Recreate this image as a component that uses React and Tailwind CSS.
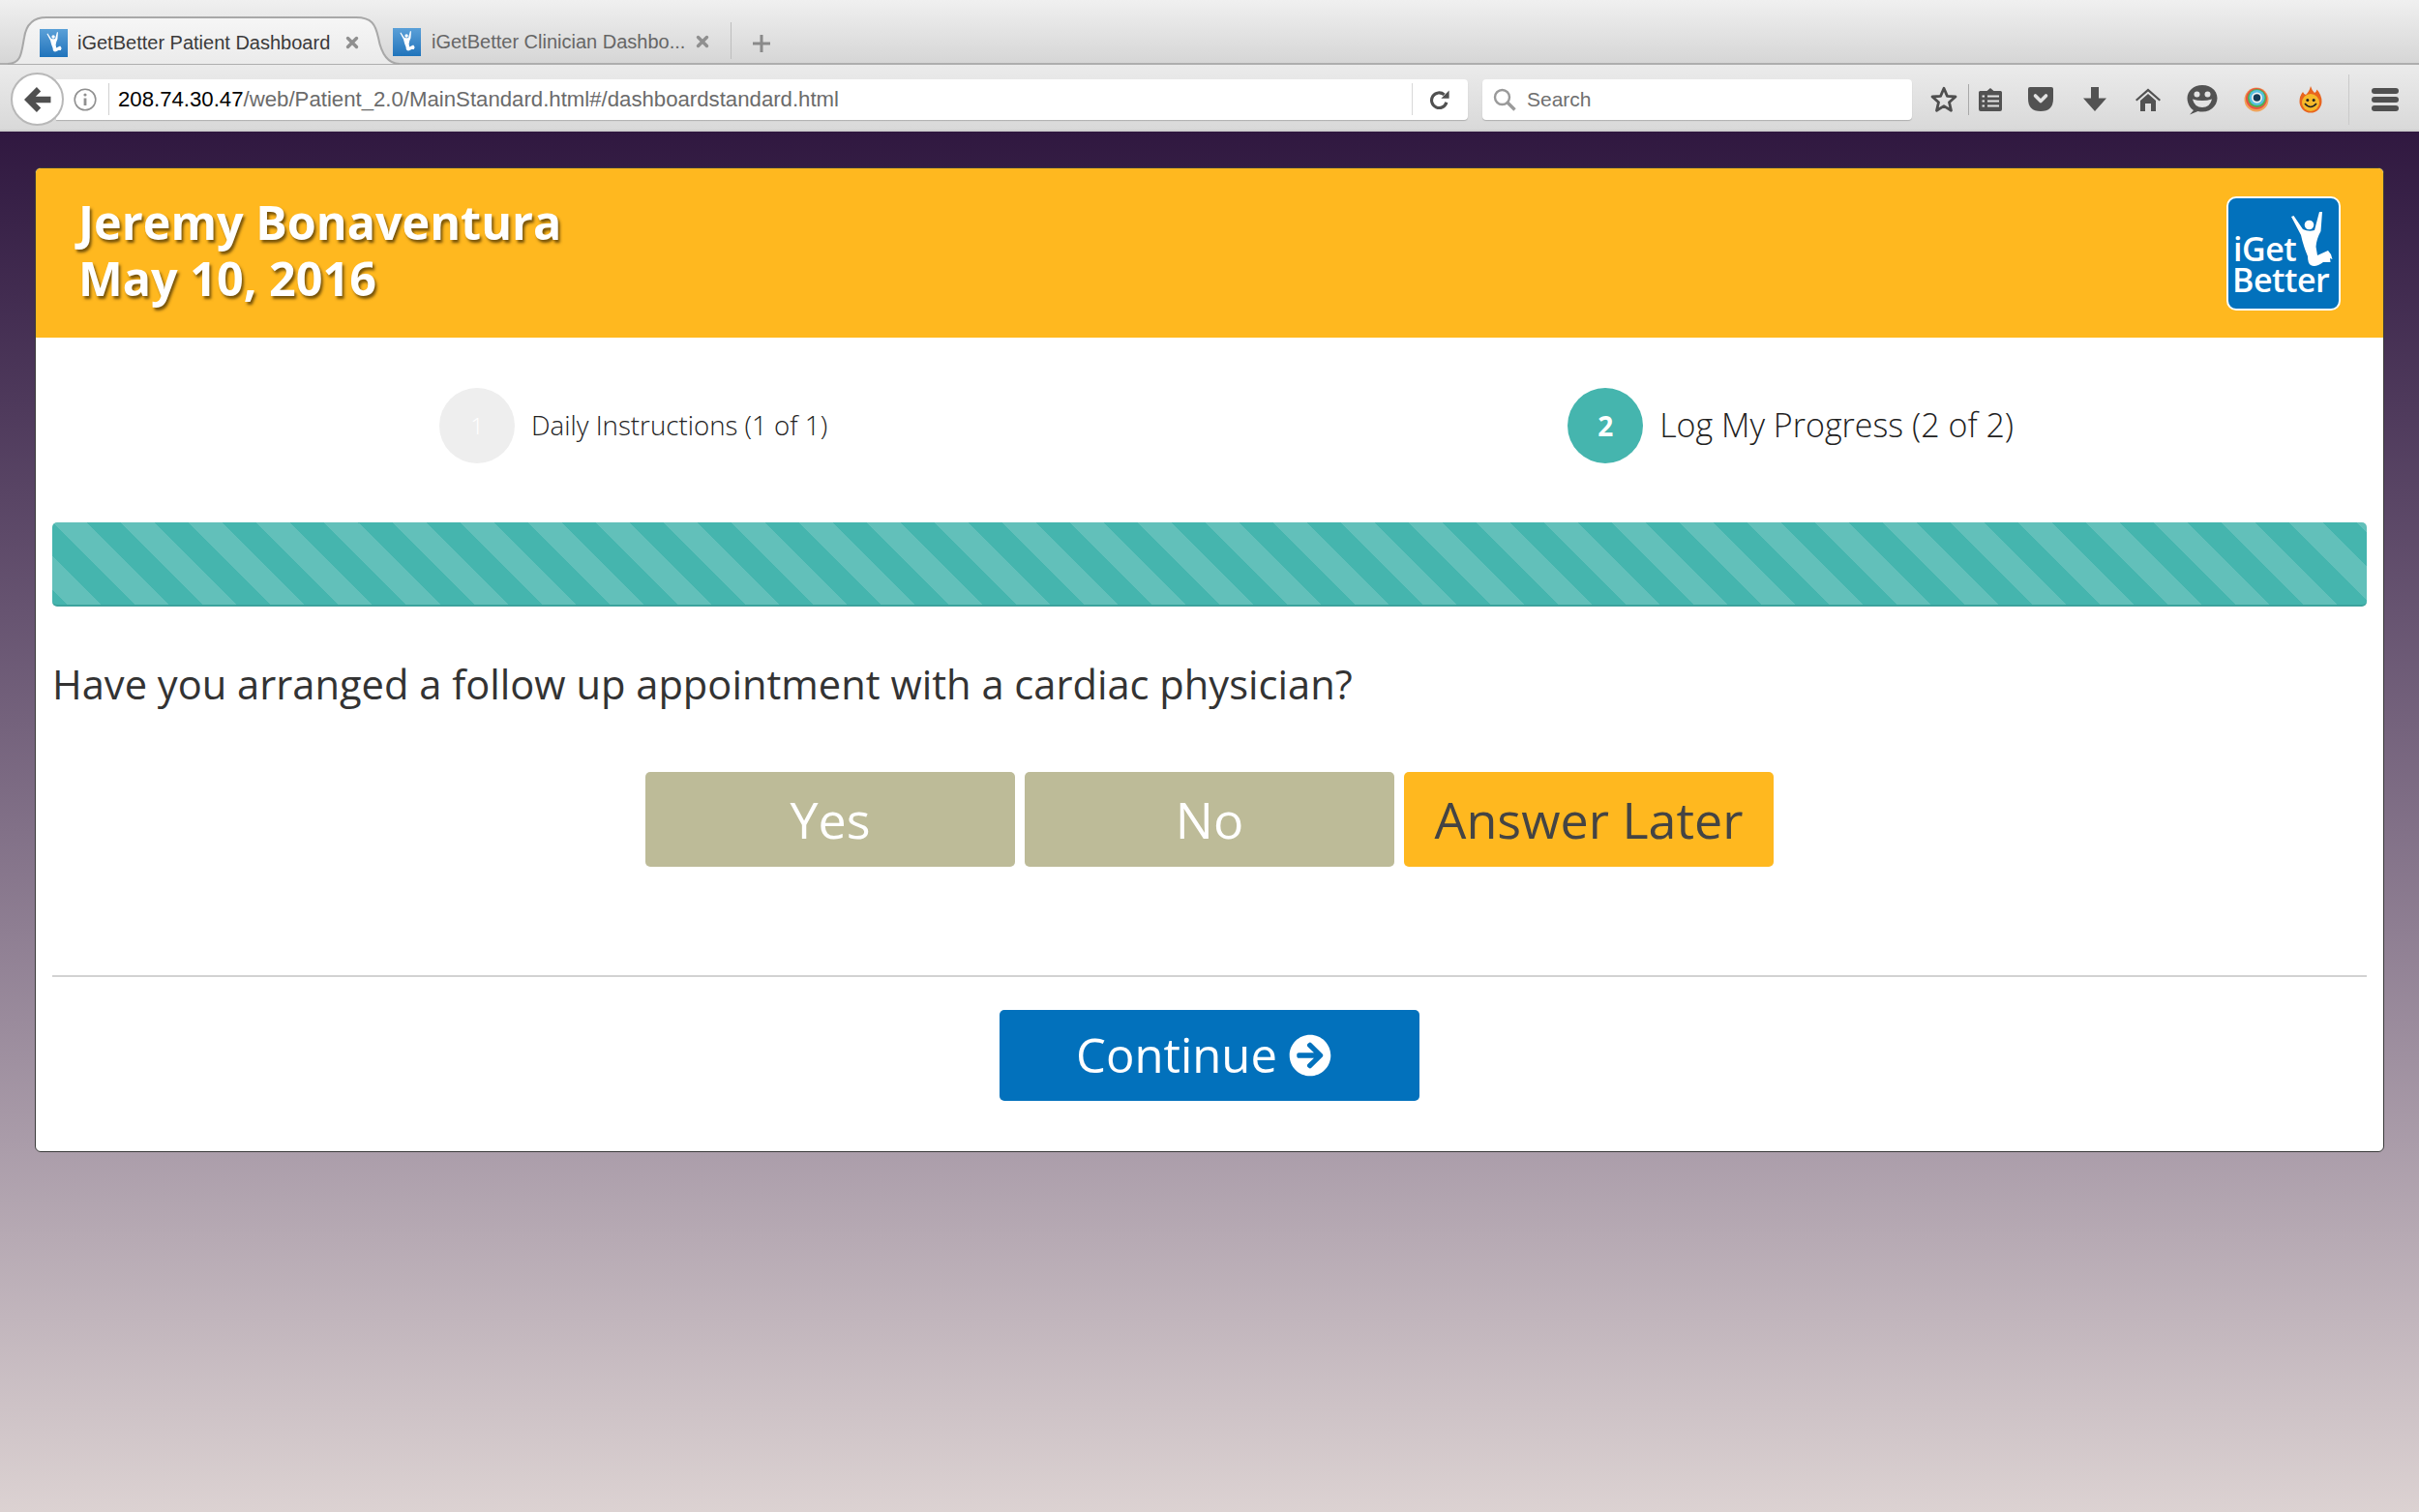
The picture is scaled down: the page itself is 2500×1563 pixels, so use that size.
import React from "react";
import { FaArrowCircleRight } from "react-icons/fa";

const sans = "[font-family:'Liberation_Sans',Arial,sans-serif]";

function Man({ className }) {
  return (
    <svg viewBox="60 10 56 72" className={className} fill="#fff">
      <circle cx="85.5" cy="29.5" r="4.8" />
      <path d="M67 21 L69.5 20 L79 34 Q85 37 91 35 L96 16 L99 16 L97.5 36 Q93 44 92.5 52 L94 61 L105 56 L108 60 L109.5 65 L107 64 L107.5 68 L100 68 Q92 74 87 71 Q84 69 84 62 Q79 50 77 40 Z" />
    </svg>
  );
}

function Favicon() {
  return (
    <div className="flex h-[29px] w-[29px] shrink-0 items-center justify-center bg-gradient-to-b from-[#5aa0d8] to-[#1f74bb]">
      <Man className="h-[26px] w-[22px]" />
    </div>
  );
}

function Close() {
  return (
    <svg viewBox="0 0 14 14" className="h-[14px] w-[14px] shrink-0" stroke="#8f8f8f" strokeWidth="3.4" strokeLinecap="round">
      <path d="M2.5 2.5 L11.5 11.5 M11.5 2.5 L2.5 11.5" />
    </svg>
  );
}

function ToolIcon({ children, vb = "0 0 28 28", cls = "h-[28px] w-[28px]" }) {
  return (
    <svg viewBox={vb} className={cls}>
      {children}
    </svg>
  );
}

function Tabs() {
  return (
    <div className={`flex h-[67px] shrink-0 items-end border-b-2 border-[#aeaeae] bg-gradient-to-b from-[#f0f0f0] to-[#d6d6d6] ${sans}`}>
      <div className="relative -mb-[2px] ml-[8px] flex h-[50px] w-[405px] items-center pl-[33px] pr-[42px] pt-[4px]">
        <svg viewBox="0 0 405 50" preserveAspectRatio="none" className="absolute inset-0 h-full w-full">
          <defs>
            <linearGradient id="tabfill" x1="0" y1="0" x2="0" y2="1">
              <stop offset="0" stopColor="#f6f6f6" />
              <stop offset="1" stopColor="#ebebeb" />
            </linearGradient>
          </defs>
          <path d="M0 49 C14 49 14 38 17 22 C19 8 26 1 40 1 L360 1 C376 1 380 8 383 22 C386 38 392 49 405 49 Z" fill="url(#tabfill)" />
          <path d="M0 49 C14 49 14 38 17 22 C19 8 26 1 40 1 L360 1 C376 1 380 8 383 22 C386 38 392 49 405 49" fill="none" stroke="#a8a8a8" strokeWidth="2" />
        </svg>
        <div className="relative flex w-full items-center gap-[10px]">
          <Favicon />
          <span className="flex-1 whitespace-nowrap text-[20px] text-[#3a3a3a]">iGetBetter Patient Dashboard</span>
          <Close />
        </div>
      </div>
      <div className="relative -ml-[7px] flex h-[50px] w-[349px] items-center gap-[11px] pr-[22px] pt-[6px]">
        <Favicon />
        <span className="flex-1 whitespace-nowrap text-[20px] text-[#666666]">iGetBetter Clinician Dashbo...</span>
        <Close />
      </div>
      <div className="mb-[4px] h-[38px] w-px bg-[#bdbdbd]" />
      <svg viewBox="0 0 18 18" className="mb-[11px] ml-[22px] h-[18px] w-[18px]" stroke="#8a8a8a" strokeWidth="3">
        <path d="M9 0 V18 M0 9 H18" />
      </svg>
    </div>
  );
}

function Toolbar() {
  return (
    <div className={`flex h-[69px] shrink-0 items-center border-b-2 border-[#cfcfcf] bg-gradient-to-b from-[#ebebeb] to-[#d9d9d9] pl-[11px] pt-[4px] ${sans}`}>
      <div className="relative z-10 flex h-[55px] w-[55px] shrink-0 items-center justify-center rounded-full border-2 border-[#b8b8b8] bg-white">
        <svg viewBox="0 0 26 26" className="h-[28px] w-[28px]" fill="#505050">
          <path d="M12 1 L16 5 L11 10 H25.5 V16 H11 L16 21 L12 25 L0 13 Z" />
        </svg>
      </div>
      <div className="-ml-[8px] flex h-[42px] w-[1459px] shrink-0 items-center rounded-r-[4px] bg-white pl-[18px] shadow-[0_1px_1px_rgba(0,0,0,0.2)]">
        <svg viewBox="0 0 24 24" className="h-[24px] w-[24px] shrink-0" fill="none" stroke="#909090" strokeWidth="1.6">
          <circle cx="12" cy="12" r="10.8" />
          <circle cx="12" cy="7" r="1.6" fill="#909090" stroke="none" />
          <path d="M12 10.5 V18" strokeWidth="2.8" />
        </svg>
        <div className="ml-[12px] h-[33px] w-px shrink-0 bg-[#d0d0d0]" />
        <div className="ml-[9px] flex-1 whitespace-nowrap text-[22.2px] text-[#6b6b6b]">
          <span className="text-black">208.74.30.47</span>/web/Patient_2.0/MainStandard.html#/dashboardstandard.html
        </div>
        <div className="h-[33px] w-px shrink-0 bg-[#d8d8d8]" />
        <svg viewBox="0 0 24 24" className="ml-[17px] mr-[18px] h-[22px] w-[22px] shrink-0" fill="none" stroke="#505050" strokeWidth="3.4">
          <path d="M19.5 15 A8.5 8.5 0 1 1 17 6.5" />
          <path d="M13.5 10.5 H22.5 V1.5 Z" fill="#505050" stroke="none" />
        </svg>
      </div>
      <div className="ml-[15px] flex h-[42px] w-[444px] shrink-0 items-center rounded-[4px] bg-white pl-[11px] shadow-[0_1px_1px_rgba(0,0,0,0.2)]">
        <svg viewBox="0 0 24 24" className="h-[24px] w-[24px] shrink-0" fill="none" stroke="#9a9a9a" strokeWidth="2.4">
          <circle cx="9.5" cy="9.5" r="7.5" />
          <path d="M15 15 L22.5 22.5" strokeWidth="3.4" />
        </svg>
        <span className="ml-[11px] text-[21px] text-[#6f6f6f]">Search</span>
      </div>
      <div className="ml-[18px] flex h-[34px] items-center">
        <ToolIcon cls="h-[30px] w-[30px]">
          <path d="M14 3 L17.2 10.6 L25.2 11.2 L19.1 16.5 L21 24.5 L14 20.2 L7 24.5 L8.9 16.5 L2.8 11.2 L10.8 10.6 Z" fill="none" stroke="#4f4f4f" strokeWidth="2.6" strokeLinejoin="round" />
        </ToolIcon>
        <div className="ml-[10px] h-[32px] w-px bg-[#a8a8a8]" />
        <div className="ml-[8px]">
          <ToolIcon>
            <path d="M2 6.5 Q2 5 3.5 5 H10.5 L14 2 L17.5 5 H24.5 Q26 5 26 6.5 V24 Q26 26 24 26 H4 Q2 26 2 24 Z" fill="#525252" />
            <path d="M5.5 10.5 H8 M11 10.5 H23 M5.5 15.5 H8 M11 15.5 H23 M5.5 20.5 H8 M11 20.5 H23" stroke="#e3e3e3" strokeWidth="2" />
          </ToolIcon>
        </div>
        <div className="ml-[24px]">
          <ToolIcon>
            <path d="M1 3 Q1 1 3 1 H25 Q27 1 27 3 V13 Q27 26 14 26 Q1 26 1 13 Z" fill="#525252" />
            <path d="M8.5 10 L14 15.5 L19.5 10" fill="none" stroke="#e3e3e3" strokeWidth="3.6" strokeLinecap="round" strokeLinejoin="round" />
          </ToolIcon>
        </div>
        <div className="ml-[28px]">
          <ToolIcon>
            <path d="M10 1 H18 V12.5 H26 L14 26 L2 12.5 H10 Z" fill="#525252" />
          </ToolIcon>
        </div>
        <div className="ml-[27px]">
          <ToolIcon>
            <path d="M1 14 L14 2.5 L27 14 L25.6 15.6 L14 5.6 L2.4 15.6 Z" fill="#525252" />
            <path d="M6 15 L14 8 L22 15 V26 H17 V18 H11 V26 H6 Z" fill="#525252" />
          </ToolIcon>
        </div>
        <div className="ml-[26px]">
          <ToolIcon vb="0 0 32 32" cls="h-[32px] w-[32px]">
            <path d="M16 1 C7 1 0.5 7 0.5 14.5 C0.5 21.5 5.5 26.5 7 27 L3 31.5 L11.5 28 Q14 28.5 16 28.5 C25 28.5 31.5 22 31.5 14.5 C31.5 7 25 1 16 1 Z" fill="#525252" />
            <circle cx="10.5" cy="10.5" r="3" fill="#e3e3e3" />
            <circle cx="21.5" cy="10.5" r="3" fill="#e3e3e3" />
            <path d="M6 15.5 Q16 18.5 26 15.5 Q24 24 16 24 Q8 24 6 15.5 Z" fill="#e3e3e3" />
          </ToolIcon>
        </div>
        <div className="ml-[26px]">
          <ToolIcon>
            <circle cx="14" cy="14" r="12.5" fill="#f0a35a" />
            <circle cx="14" cy="13" r="11" fill="#e9553f" />
            <circle cx="14.5" cy="12.5" r="9.5" fill="#4cb050" />
            <circle cx="14.5" cy="12" r="8" fill="#56c0e0" />
            <circle cx="14.5" cy="12" r="5.5" fill="#f2f2f2" />
            <circle cx="14.5" cy="12" r="3.8" fill="#163a55" />
          </ToolIcon>
        </div>
        <div className="ml-[28px]">
          <ToolIcon cls="h-[30px] w-[28px]">
            <path d="M14 0 Q15.5 5 18 7 Q20 6 20.5 3.5 Q25.5 9 25.5 16 A11.5 11.5 0 1 1 2.5 16 Q2.5 10 6 6 Q7 8.5 9 9 Q12.5 6 14 0 Z" fill="#e8641e" />
            <circle cx="14" cy="17" r="9" fill="#f5b82a" />
            <circle cx="10.8" cy="14.5" r="1.5" fill="#222" />
            <circle cx="17.2" cy="14.5" r="1.5" fill="#222" />
            <path d="M8 18 Q14 25 20 18" fill="none" stroke="#222" strokeWidth="1.6" />
          </ToolIcon>
        </div>
        <div className="ml-[25px] h-[52px] w-px bg-[#cacaca]" />
        <div className="ml-[23px] flex w-[28px] flex-col gap-[3px]">
          <div className="h-[6px] rounded-full bg-[#505050]" />
          <div className="h-[6px] rounded-full bg-[#505050]" />
          <div className="h-[6px] rounded-full bg-[#505050]" />
        </div>
      </div>
    </div>
  );
}

function Logo() {
  return (
    <div className="relative h-[118px] w-[118px] overflow-hidden rounded-[10px] border-2 border-white bg-[#0271bc]">
      <Man className="absolute left-[58px] top-[8px] h-[72px] w-[56px]" />
      <div className="absolute left-[5px] top-[37px] text-[34px] font-semibold leading-[30px] tracking-[-0.5px] text-white">iGet</div>
      <div className="absolute left-[4px] top-[69px] text-[34px] font-semibold leading-[30px] tracking-[-0.5px] text-white">Better</div>
    </div>
  );
}

function Card() {
  return (
    <div className="h-[1018px] w-[2428px] overflow-hidden rounded-[6px] border-[1.5px] border-[#3a3a3a] bg-white">
      <header className="flex h-[175px] items-center justify-between bg-[#ffb81f] pl-[44px] pr-[44px]">
        <h1 className="-mt-[8px] text-[48.5px] font-bold leading-[58px] text-white [text-shadow:2px_3px_3px_rgba(60,40,0,0.7)]">
          Jeremy Bonaventura
          <br />
          May 10, 2016
        </h1>
        <Logo />
      </header>
      <div className="flex h-[191px] items-start pt-[52px]">
        <div className="ml-[417px] flex items-center">
          <div className="flex h-[78px] w-[78px] items-center justify-center rounded-full bg-[#eeeeee] text-[24px] font-light text-white">1</div>
          <span className="ml-[17px] text-[27.7px] font-light text-[#222222]">Daily Instructions (1 of 1)</span>
        </div>
        <div className="ml-[765px] flex items-center">
          <div className="flex h-[78px] w-[78px] items-center justify-center rounded-full bg-[#45b5ae] text-[28px] font-bold text-white">2</div>
          <span className="-mt-[2px] ml-[17px] text-[34px] font-light text-[#222222]">Log My Progress (2 of 2)</span>
        </div>
      </div>
      <div className="px-[17px]">
        <div className="h-[87px] rounded-[5px] border-b-2 border-[#3ca39d] bg-[repeating-linear-gradient(45deg,#45b5ae_0,#45b5ae_11.3px,#62c0ba_11.3px,#62c0ba_36.05px,#45b5ae_36.05px,#45b5ae_49.5px)]" />
        <p className="mt-[51px] text-[41.65px] leading-[58px] text-[#333333]">Have you arranged a follow up appointment with a cardiac physician?</p>
        <div className="mt-[62px] flex justify-center gap-[10px]">
          <button className="h-[98px] w-[382px] rounded-[5px] bg-[#bdbb98] text-[52px] text-white">Yes</button>
          <button className="h-[98px] w-[382px] rounded-[5px] bg-[#bdbb98] text-[52px] text-white">No</button>
          <button className="h-[98px] w-[382px] rounded-[5px] bg-[#ffb81f] text-[52px] text-[#444444]">Answer Later</button>
        </div>
        <div className="mt-[112px] h-[2px] bg-[#d2d2d2]" />
        <div className="mt-[34px] flex justify-center">
          <button className="flex h-[94px] w-[434px] items-center justify-center gap-[12px] rounded-[5px] bg-[#0271bc] pr-[12px] text-[49px] text-white">
            Continue
            <FaArrowCircleRight className="h-[44px] w-[44px]" />
          </button>
        </div>
      </div>
    </div>
  );
}

export default function App() {
  return (
    <div className="flex h-[1563px] w-[2500px] flex-col overflow-hidden [font-family:'Open_Sans',sans-serif]">
      <Tabs />
      <Toolbar />
      <main className="flex-1 bg-gradient-to-b from-[#301840] to-[#dcd2d2] pl-[36px] pt-[37px]">
        <Card />
      </main>
    </div>
  );
}
